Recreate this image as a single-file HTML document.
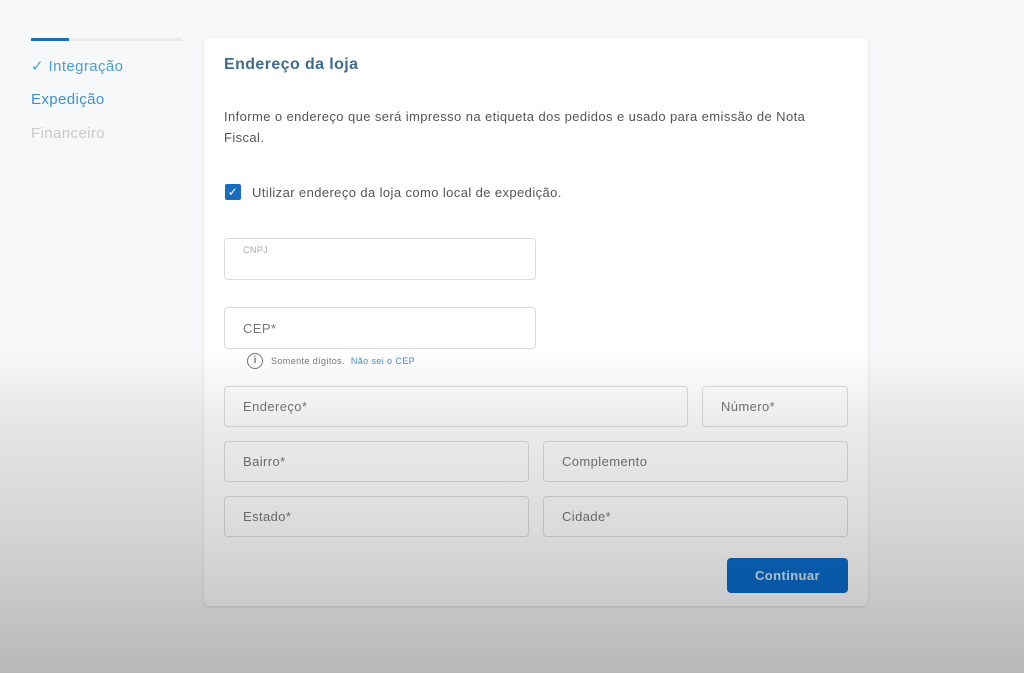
<!DOCTYPE html>
<html><head><meta charset="utf-8"><style>
*{box-sizing:border-box;margin:0;padding:0}
body{width:1024px;height:673px;overflow:hidden;background:#f7f8f9;font-family:"Liberation Sans",sans-serif;position:relative;letter-spacing:.4px}
.a{position:absolute;white-space:nowrap}
.in{position:absolute;border:1px solid #dcdcdc;border-radius:4px;background:#fff;color:#777;font-size:13px;padding-left:18px;display:flex;align-items:center}
</style></head><body>
<div class="a" style="left:31px;top:38px;width:151px;height:3px;background:#e8eaec"></div>
<div class="a" style="left:31px;top:38px;width:38px;height:3px;background:#1f6fb8"></div>
<div class="a" style="left:31px;top:57px;font-size:15px;color:#4a9fd8">✓ Integração</div>
<div class="a" style="left:31px;top:91px;font-size:15px;color:#3d8fd0">Expedição</div>
<div class="a" style="left:31px;top:125px;font-size:15px;color:#c8c8c8">Financeiro</div>
<div class="a" style="left:204px;top:38px;width:664px;height:568px;background:#fff;border-radius:6px;box-shadow:0 1px 3px rgba(0,0,0,.12)"></div>
<div class="a" style="left:224px;top:56px;font-size:16px;font-weight:bold;color:#3f6b8f">Endereço da loja</div>
<div class="a" style="left:224px;top:106px;font-size:13px;line-height:21px;color:#555">Informe o endereço que será impresso na etiqueta dos pedidos e usado para emissão de Nota<br>Fiscal.</div>
<div class="a" style="left:225px;top:184px;width:16px;height:16px;background:#1a6cc0;border-radius:2px;color:#fff;font-size:12px;text-align:center;line-height:16px">✓</div>
<div class="a" style="left:252px;top:185px;font-size:13px;color:#555">Utilizar endereço da loja como local de expedição.</div>
<div class="in" style="left:224px;top:238px;width:312px;height:42px;align-items:flex-start;padding-top:6px;font-size:9px;color:#aaa">CNPJ</div>
<div class="in" style="left:224px;top:307px;width:312px;height:42px">CEP*</div>
<div class="a" style="left:247px;top:353px;width:16px;height:16px;border:1.5px solid #777;border-radius:50%;font-size:10px;color:#777;text-align:center;line-height:13px;font-weight:bold;letter-spacing:0">i</div>
<div class="a" style="left:271px;top:356px;font-size:9px;color:#777">Somente dígitos. <span style="color:#3d8fd0;margin-left:3px">Não sei o CEP</span></div>
<div class="in" style="left:224px;top:386px;width:464px;height:41px">Endereço*</div>
<div class="in" style="left:702px;top:386px;width:146px;height:41px">Número*</div>
<div class="in" style="left:224px;top:441px;width:305px;height:41px">Bairro*</div>
<div class="in" style="left:543px;top:441px;width:305px;height:41px">Complemento</div>
<div class="in" style="left:224px;top:496px;width:305px;height:41px">Estado*</div>
<div class="in" style="left:543px;top:496px;width:305px;height:41px">Cidade*</div>
<div class="a" style="left:727px;top:558px;width:121px;height:35px;background:#0a6ccc;border-radius:4px;color:#d8e6f2;font-size:13px;font-weight:bold;text-align:center;line-height:35px">Continuar</div>
<div class="a" style="left:0;top:0;width:1024px;height:673px;background:linear-gradient(to bottom,rgba(0,0,0,0) 0,rgba(0,0,0,0) 52%,rgba(0,0,0,.07) 62%,rgba(0,0,0,.15) 80%,rgba(0,0,0,.26) 100%)"></div>
</body></html>
